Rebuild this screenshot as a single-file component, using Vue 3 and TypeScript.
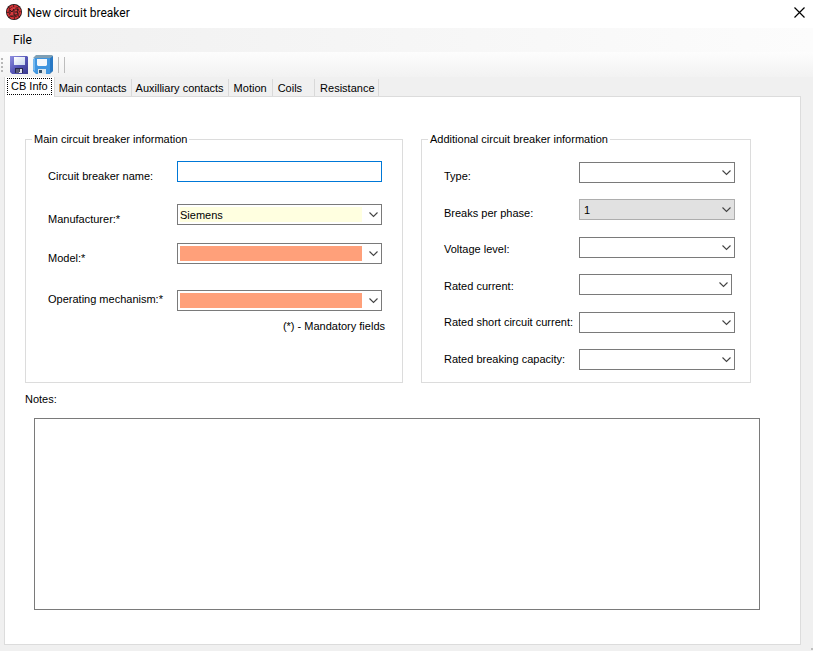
<script setup lang="ts">
import { ref } from 'vue'

interface Field {
  id: string
  label: string
  options: string[]
  tone?: 'filled' | 'missing' | 'button' | 'narrow'
}

const tabs = ['CB Info', 'Main contacts', 'Auxilliary contacts', 'Motion', 'Coils', 'Resistance']
const activeTab = ref('CB Info')
const breakerName = ref('')
const notes = ref('')

const mainFields: Field[] = [
  { id: 'manufacturer', label: 'Manufacturer:*', options: ['Siemens'], tone: 'filled' },
  { id: 'model', label: 'Model:*', options: [''], tone: 'missing' },
  { id: 'mechanism', label: 'Operating mechanism:*', options: [''], tone: 'missing' },
]

const additionalFields: Field[] = [
  { id: 'type', label: 'Type:', options: [''] },
  { id: 'breaks', label: 'Breaks per phase:', options: ['1'], tone: 'button' },
  { id: 'voltage', label: 'Voltage level:', options: [''] },
  { id: 'current', label: 'Rated current:', options: [''], tone: 'narrow' },
  { id: 'short-circuit', label: 'Rated short circuit current:', options: [''] },
  { id: 'breaking', label: 'Rated breaking capacity:', options: [''] },
]
</script>

<template>
  <div class="window">
    <header class="titlebar">
      <svg class="app-icon" viewBox="0 0 16 16" aria-hidden="true">
        <circle cx="8" cy="8" r="8" fill="#1c1414" />
        <circle cx="8" cy="8" r="6.3" fill="none" stroke="#d03035" stroke-width="1.9" stroke-dasharray="4.2 .6" />
        <circle cx="8" cy="8" r="4.9" fill="#d83a3e" />
        <path d="M4 10V6l2 2 2-3v6M9 5h2l1 1-1 2H9m2 0 1 1-1 2H8M5 12h5" fill="none" stroke="#1c1414" stroke-width=".9" />
      </svg>
      <h1>New circuit breaker</h1>
      <button class="close" type="button" aria-label="Close">
        <svg viewBox="0 0 11 11" aria-hidden="true">
          <path d="M.5.5l10 10M10.5.5l-10 10" fill="none" stroke="#000" stroke-width="1.2" />
        </svg>
      </button>
    </header>

    <nav class="menubar">
      <button type="button">File</button>
    </nav>

    <div class="toolbar">
      <span class="grip"></span>
      <button class="tool" type="button" aria-label="Save">
        <svg width="18" height="18" viewBox="0 0 18 18" aria-hidden="true">
          <defs>
            <linearGradient id="disk" x1="0" y1="0" x2="1" y2="1">
              <stop offset="0" stop-color="#8f8fe0" />
              <stop offset=".5" stop-color="#5757b8" />
              <stop offset="1" stop-color="#37378c" />
            </linearGradient>
            <linearGradient id="label" x1="0" y1="0" x2="1" y2="1">
              <stop offset="0" stop-color="#fff" />
              <stop offset="1" stop-color="#c9d6ee" />
            </linearGradient>
          </defs>
          <path d="M0 0h17l1 1v17H2l-2-2z" fill="url(#disk)" />
          <path d="M4 1h11v8H4z" fill="url(#label)" />
          <path d="M5 12h8v5H5z" fill="#26264f" />
          <path d="M6 13h3v4H6z" fill="#5a5a78" />
          <path d="M9 13h3v4H9z" fill="#dfe3ee" />
          <path d="M9 13h1v3H9z" fill="#44445f" />
        </svg>
      </button>
      <button class="tool" type="button" aria-label="Save all">
        <svg width="20" height="20" viewBox="0 0 20 20" aria-hidden="true">
          <path d="M3 0h16l1 1v15l-3 3V3H0z" fill="#7f9fb4" />
          <path d="M16 4l4-3v15l-4 3z" fill="#2878c4" />
          <path d="M0 4l2-1h15v16H3l-3-3z" fill="#3f95e0" />
          <path d="M0 4h2v12l-2-1z" fill="#75b8ee" />
          <path d="M4 4h10v6l-1 1H5l-1-1z" fill="#f4f8fc" />
          <path d="M5 14h8v5H5z" fill="#dce6ec" />
          <path d="M6 15h3v3H6z" fill="#34536e" />
        </svg>
      </button>
      <span class="separator"></span>
      <span class="separator"></span>
    </div>

    <main class="body">
      <div class="tabs" role="tablist">
        <button
          v-for="tab in tabs"
          :key="tab"
          type="button"
          role="tab"
          class="tab"
          :class="{ active: tab === activeTab }"
          :aria-selected="tab === activeTab"
          @click="activeTab = tab"
        ><span>{{ tab }}</span></button>
      </div>

      <section class="panel">
        <div class="groups">
          <fieldset class="main-group">
            <legend>Main circuit breaker information</legend>
            <div class="columns">
              <div class="labels">
                <label for="name">Circuit breaker name:</label>
                <label v-for="f in mainFields" :key="f.id" :for="f.id">{{ f.label }}</label>
              </div>
              <div class="fields">
                <input id="name" v-model="breakerName" class="box name" type="text" />
                <div v-for="f in mainFields" :key="f.id" class="combo" :class="f.tone">
                  <select :id="f.id" class="box">
                    <option v-for="o in f.options" :key="o">{{ o }}</option>
                  </select>
                  <svg class="chevron" viewBox="0 0 9 6" aria-hidden="true"><path d="M.5.5l4 4 4-4" /></svg>
                </div>
              </div>
            </div>
            <p class="hint">(*) - Mandatory fields</p>
          </fieldset>

          <fieldset class="extra-group">
            <legend>Additional circuit breaker information</legend>
            <div class="columns">
              <div class="labels">
                <label v-for="f in additionalFields" :key="f.id" :for="f.id">{{ f.label }}</label>
              </div>
              <div class="fields">
                <div v-for="f in additionalFields" :key="f.id" class="combo" :class="f.tone">
                  <select :id="f.id" class="box">
                    <option v-for="o in f.options" :key="o">{{ o }}</option>
                  </select>
                  <svg class="chevron" viewBox="0 0 9 6" aria-hidden="true"><path d="M.5.5l4 4 4-4" /></svg>
                </div>
              </div>
            </div>
          </fieldset>
        </div>

        <label class="notes-label" for="notes">Notes:</label>
        <textarea id="notes" v-model="notes" class="notes"></textarea>
      </section>
    </main>
  </div>
</template>

<style>
body {
  margin: 0;
}
</style>

<style scoped>
* {
  box-sizing: border-box;
}

.window {
  display: flex;
  flex-direction: column;
  min-height: 100vh;
  background: linear-gradient(#bfbfbf, #bfbfbf) right 0 bottom 1px / 2px 2px no-repeat, #f0f0f0;
  color: #000;
  font: 11px/14px "Liberation Sans", Arial, sans-serif;
}

button,
input,
select,
textarea {
  margin: 0;
  padding: 0;
  border: 0;
  border-radius: 0;
  background: none;
  color: inherit;
  font: inherit;
}

.titlebar {
  display: flex;
  align-items: center;
  height: 28px;
  padding: 0 8px 4px 6px;
  background: #fff;
}

.app-icon {
  width: 16px;
  height: 16px;
}

.titlebar h1 {
  flex: 1;
  margin: 0 0 0 5px;
  padding-top: 2px;
  font: 12px/16px Roboto, sans-serif;
}

.close {
  display: flex;
}

.close svg {
  width: 11px;
  height: 11px;
}

.menubar {
  display: flex;
  height: 24px;
  padding-left: 13px;
  background: linear-gradient(90deg, #f0f0f0, #fcfcfc);
}

.menubar button {
  font: 12px/24px Roboto, sans-serif;
}

.toolbar {
  display: flex;
  align-items: center;
  height: 25px;
  padding-left: 1px;
  background: linear-gradient(#fdfdfd, #f2f2f2);
}

.grip {
  width: 2px;
  height: 14px;
  margin-right: 7px;
  background: repeating-linear-gradient(#b8b8b8 0 2px, transparent 2px 4px);
}

.tool {
  display: flex;
  margin-right: 5px;
}

.separator {
  width: 1px;
  height: 16px;
  margin-right: 5px;
  background: #bdbdbd;
}

.body {
  display: flex;
  flex: 1;
  flex-direction: column;
  padding: 0 12px 6px 4px;
}

.tabs {
  z-index: 1;
  display: flex;
  align-items: flex-end;
  height: 19px;
}

.tab {
  height: 17px;
  padding: 0 4px;
  border-right: 1px solid #d9d9d9;
  white-space: nowrap;
}

.tab:nth-child(4) {
  padding: 0 5px;
}

.tab:nth-child(5) {
  padding: 0 12px 0 5px;
}

.tab:last-child {
  padding: 0 3px 0 5px;
}

.tab.active {
  height: 20px;
  margin-bottom: -1px;
  padding: 0 2px 2px;
  border-left: 1px solid #d9d9d9;
  background: #fff;
}

.tab.active span {
  display: block;
  padding: 0 3px 1px;
  border: 1px dotted #000;
}

.panel {
  display: flex;
  flex: 1;
  flex-direction: column;
  padding: 35px 40px 34px 20px;
  border: 1px solid #dcdcdc;
  background: #fff;
}

.groups {
  display: grid;
  grid-template-columns: 378fr 330fr;
  gap: 18px;
  margin-right: 9px;
}

fieldset {
  min-width: 0;
  height: 251px;
  margin: 0;
  padding: 0 15px 0 22px;
  border: 1px solid #dcdcdc;
}

legend {
  margin-left: -16px;
  padding: 0 2px;
}

.main-group {
  padding-right: 20px;
}

.columns {
  display: flex;
}

.labels,
.fields {
  display: grid;
}

.labels {
  white-space: nowrap;
}

.fields {
  flex: 1;
  align-content: start;
}

.main-group .labels {
  flex: 0 0 129px;
  padding-top: 23px;
  grid-template-rows: 43px 39px 41px 14px;
}

.main-group .fields {
  padding-top: 15px;
  grid-template-rows: 43px 39px 47px 21px;
}

.extra-group .labels {
  flex: 0 0 135px;
  align-content: space-between;
  height: 220px;
  padding-top: 23px;
}

.extra-group .fields {
  align-content: space-between;
  height: 224px;
  padding-top: 16px;
}

.box {
  display: block;
  width: 100%;
  height: 21px;
  border: 1px solid #7a7a7a;
  background: #fff;
  outline: none;
  appearance: none;
}

.name {
  padding: 0 3px;
  border-color: #0078d7;
}

.combo {
  position: relative;
  height: 21px;
}

.combo .box {
  padding: 2px 19px 2px 2px;
}

.filled .box {
  background: linear-gradient(#ffffe0, #ffffe0) content-box, #fff;
}

.missing .box {
  background: linear-gradient(#ffa07a, #ffa07a) content-box, #fff;
}

.button .box {
  padding-left: 4px;
  border-color: #adadad;
  background: #e1e1e1;
}

.narrow {
  margin-right: 3px;
}

.chevron {
  position: absolute;
  top: 8px;
  right: 4px;
  width: 9px;
  height: 6px;
  fill: none;
  stroke: #444;
  stroke-width: 1.1;
  pointer-events: none;
}

.hint {
  margin: 8px -3px 0 0;
  text-align: right;
}

.notes-label {
  align-self: flex-start;
  margin-top: 9px;
}

.notes {
  display: block;
  flex: 1;
  min-height: 60px;
  margin: 12px 0 0 9px;
  padding: 3px;
  border: 1px solid #7a7a7a;
  outline: none;
  resize: none;
}
</style>
